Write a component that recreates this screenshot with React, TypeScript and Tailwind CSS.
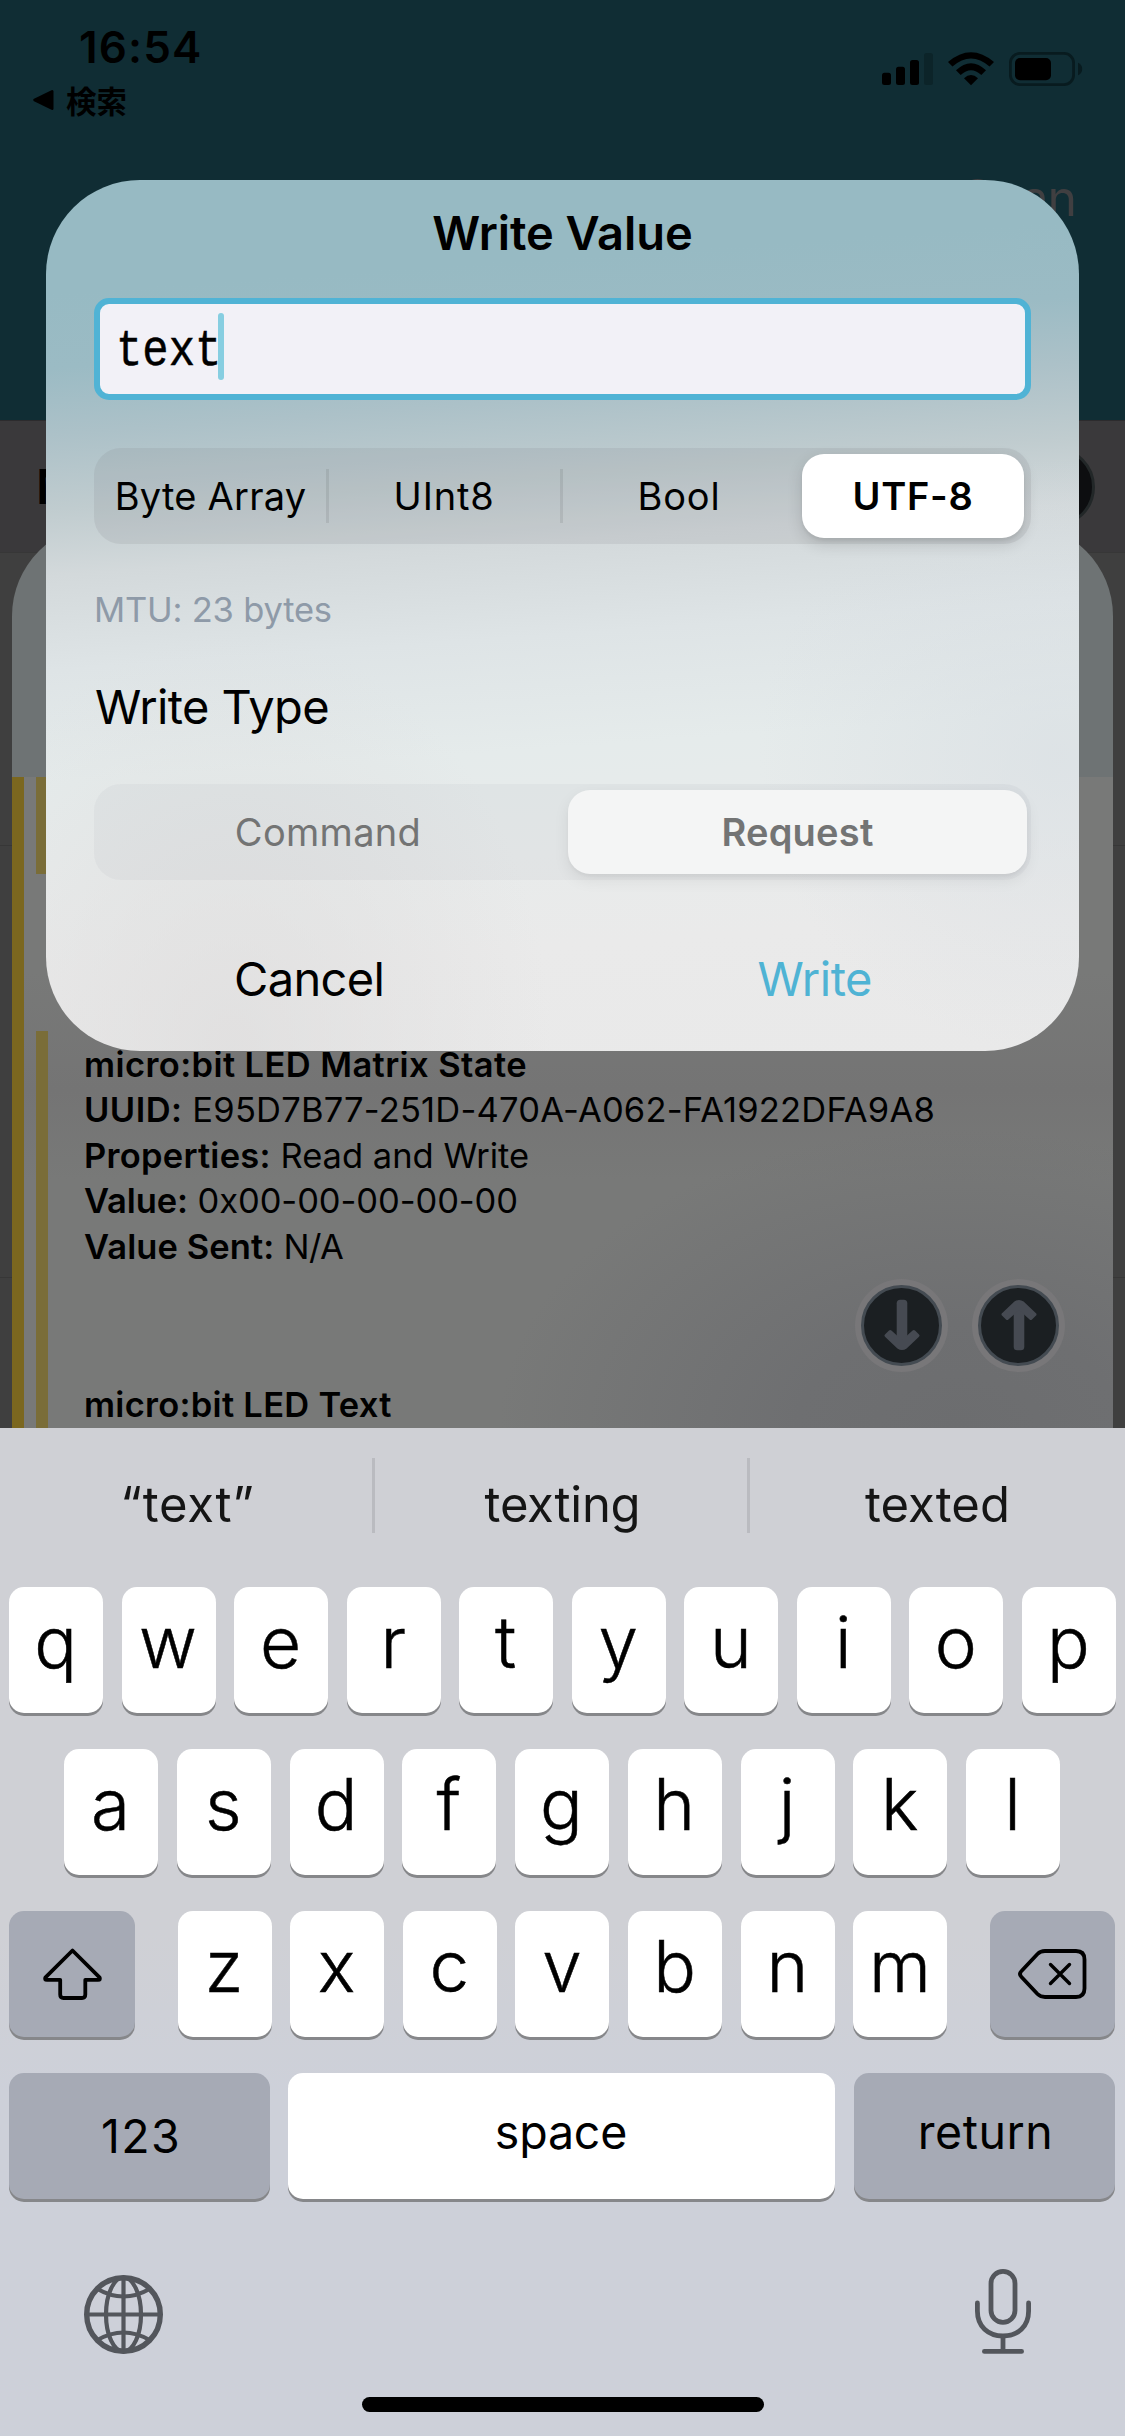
import type { ReactNode } from "react";

function StatusIcons() {
  return (
    <svg width="202" height="36" viewBox="881 51 202 36" className="block">
      <rect x="882" y="72.7" width="9" height="12.3" rx="2.5" />
      <rect x="896" y="66.7" width="9" height="18.3" rx="2.5" />
      <rect x="910" y="60" width="9" height="25" rx="2.5" />
      <rect x="924" y="53" width="9" height="32" rx="2.5" fill="#0c2429" />
      <path d="M948 62 Q971 42.5 994 62 L989.5 66.5 Q971 50.5 952.5 66.5Z" />
      <path d="M956 70.3 Q971 56 986 70.3 L981.3 75 Q971 65.5 960.7 75Z" />
      <path d="M964 78.3 Q971 71.8 978 78.3 L971 85.2Z" />
      <rect x="1010.4" y="53.4" width="63.2" height="31.2" rx="9.5" fill="none" stroke="#081b1f" strokeWidth="2.8" />
      <rect x="1015" y="58" width="36" height="22.3" rx="5" />
      <path d="M1078 62.7 Q1082.2 64.5 1082.2 69 T1078 75.3Z" fill="#081b1f" />
    </svg>
  );
}

function ArrowButton({ up }: { up?: boolean }) {
  return (
    <div className="flex h-[93px] w-[93px] items-center justify-center rounded-full bg-[#787779]">
      <div className="flex h-[81px] w-[81px] items-center justify-center rounded-full border-[3px] border-[#444b52] bg-[#1b1f22]">
        <svg width="50" height="52" viewBox="-25 -26 50 52" className={up ? "rotate-180" : ""}>
          <rect x="-5.3" y="-25.3" width="10.6" height="46" rx="3.5" fill="#464a52" />
          <path
            d="M-16.8 9.2 L-13 5.4 Q-11.8 4.4 -10.6 5.4 L0 15 L10.6 5.4 Q11.8 4.4 13 5.4 L16.8 9.2 Q18.2 10.4 17 11.7 L4.6 23.4 Q0 26.8 -4.6 23.4 L-17 11.7 Q-18.2 10.4 -16.8 9.2Z"
            fill="#464a52"
          />
        </svg>
      </div>
    </div>
  );
}

function Line({ label, track, children, valueTrack = "" }: { label: string; track: string; children?: ReactNode; valueTrack?: string }) {
  return (
    <p className="h-[45.4px] whitespace-nowrap text-[34.5px] leading-[45.4px]">
      <span className={`font-semibold ${track}`}>{label}</span>
      {children && <span className={valueTrack}> {children}</span>}
    </p>
  );
}

function Backdrop() {
  return (
    <div className="flex h-full flex-col bg-[#3f3f3f]">
      <header className="h-[420px] bg-[#102d34]">
        <div className="flex h-[173px] justify-between pr-[42px]">
          <div className="pt-[25px]">
            <p className="pl-[79px] text-[44px] leading-[44px] font-semibold tracking-[1.14px]">16:54</p>
            <div className="mt-[16px] flex h-[30px] items-center pl-[33px]">
              <svg width="21" height="22" viewBox="0 0 21 22">
                <path d="M1 9.8 L18.5 1.2 Q20.5 0.6 20.5 2.6 V19.4 Q20.5 21.4 18.5 20.8 L1 12.2 Q-0.6 11 1 9.8Z" />
              </svg>
              <span className="ml-[12px] font-['Noto_Sans_CJK_JP',sans-serif] text-[30.5px] leading-[30px] font-bold">検索</span>
            </div>
          </div>
          <div className="pt-[51px]">
            <StatusIcons />
          </div>
        </div>
        <p className="pr-[49px] text-right text-[50px] leading-[50px] tracking-[-1px] text-[#403f41]">Scan</p>
      </header>
      <div className="flex h-[132px] shrink-0 items-center justify-between border-t border-[#2c2b2d] bg-[#3a393b] pr-[30px] pl-[36px]">
        <span className="text-[48px] leading-[48px] font-semibold">N</span>
        <div className="h-20 w-20 rounded-full border-[3px] border-[#222728] bg-[#0d0e10]" />
      </div>
      <div className="h-[293px] border-t border-[#373737]" />
      <div className="h-[432px] border-t border-[#373737]" />
      <div className="h-[151px] border-t border-[#373737]" />
    </div>
  );
}

function Sheet() {
  return (
    <section className="absolute top-[524px] left-[12px] flex h-[904px] w-[1101px] flex-col overflow-hidden rounded-t-[92px] bg-[#6e7374]">
      <div className="h-[253px] shrink-0" />
      <div className="flex flex-1 bg-[#787978] bg-[radial-gradient(ellipse_460px_300px_at_86%_100%,#6c6d6f_0%,#6e6f71_35%,transparent_100%),linear-gradient(180deg,transparent_30%,#747474_48%,transparent_62%)]">
        <div className="w-[12px] bg-[#7b671f]" />
        <div className="ml-[12px] flex flex-1 flex-col">
          <div className="h-[97px] w-[12px] bg-[#7a6d38]" />
          <div className="mt-[157px] flex flex-1">
            <div className="w-[12px] bg-[#7a6d38]" />
            <div className="flex-1 pt-[11px] pl-[36px]">
              <Line label="micro:bit LED Matrix State" track="tracking-[0.4px]" />
              <Line label="UUID:" track="tracking-[0.44px]" valueTrack="tracking-[0.2px]">
                E95D7B77-251D-470A-A062-FA1922DFA9A8
              </Line>
              <Line label="Properties:" track="tracking-[0.25px]">
                Read and Write
              </Line>
              <Line label="Value:" track="tracking-[-0.1px]" valueTrack="tracking-[-0.08px]">
                0x00-00-00-00-00
              </Line>
              <Line label="Value Sent:" track="tracking-[0.1px]" valueTrack="tracking-[-0.6px]">
                N/A
              </Line>
              <div className="mt-[10px] mb-[10px] flex justify-end gap-[24px] pr-[48px]">
                <ArrowButton />
                <ArrowButton up />
              </div>
              <Line label="micro:bit LED Text" track="tracking-[0.28px]" />
            </div>
          </div>
        </div>
      </div>
    </section>
  );
}

function Divider() {
  return <div className="-mx-[1.5px] h-[54px] w-[3px] self-center bg-black/8" />;
}

function Dialog() {
  return (
    <section className="absolute top-[180px] left-[46px] h-[871px] w-[1033px] rounded-[94px] bg-[radial-gradient(ellipse_320px_420px_at_18%_100%,rgba(222,221,221,0.75),transparent),radial-gradient(ellipse_300px_300px_at_98%_66%,rgba(215,221,226,0.6),transparent),linear-gradient(176deg,#97bac3_0%,#97bac3_12%,#9bbbc4_20%,#acc1c8_27%,#c0cccf_35%,#d3d9db_42%,#dee4e6_52%,#e5ebeb_64%,#e8ebeb_75%,#eaeaea_85%,#e9e9e9_100%)] px-[48px] pt-[25px]">
      <h1 className="text-center text-[47px] leading-[56px] font-semibold tracking-[-0.06px]">Write Value</h1>
      <div className="mt-[37px] flex h-[102px] items-center rounded-[15px] border-[6px] border-[#50b3d5] bg-[#f2f1f7] pl-[16px]">
        <div className="h-[58px] w-[102px] shrink-0">
          <span className="inline-block origin-left scale-x-[0.844] pt-[3px] font-['Liberation_Mono',monospace] text-[52px] leading-[58px] [-webkit-text-stroke:0.5px_black]">text</span>
        </div>
        <div className="-mt-[5px] h-[67px] w-[6px] shrink-0 rounded-full bg-[#87cee1]" />
      </div>

      <div className="mt-[48px] flex h-[96px] justify-between rounded-[27px] bg-[#767680]/14 text-[38px] leading-none">
        <div className="flex w-[233px] items-center justify-center tracking-[0.24px]">Byte Array</div>
        <Divider />
        <div className="flex w-[234px] items-center justify-center tracking-[0.8px]">UInt8</div>
        <Divider />
        <div className="flex w-[236px] items-center justify-center tracking-[0.8px]">Bool</div>
        <div className="flex w-[234px] py-[6px] pr-[7px] pl-[5px]">
          <div className="flex flex-1 items-center justify-center rounded-[22px] bg-white font-semibold tracking-[0.73px] shadow-[0_6px_16px_rgba(0,0,0,0.14),0_3px_3px_rgba(0,0,0,0.05)]">
            UTF-8
          </div>
        </div>
      </div>

      <p className="mt-[47.5px] text-[34.5px] leading-[36px] tracking-[-0.2px] text-[#8e9aa8]">MTU: 23 bytes</p>
      <h2 className="mt-[51.5px] pl-[1px] text-[47px] leading-[56px] tracking-[-0.6px]">Write Type</h2>

      <div className="mt-[49px] flex h-[96px] rounded-[27px] bg-[#767680]/6 text-[38px] leading-none text-[#737474]">
        <div className="flex w-[468px] items-center justify-center tracking-[0.3px]">Command</div>
        <div className="flex w-[469px] py-[6px] pr-[4px] pl-[6px]">
          <div className="flex flex-1 items-center justify-center rounded-[22px] bg-[#f4f5f5] font-semibold tracking-[0.23px] shadow-[0_6px_16px_rgba(0,0,0,0.07),0_3px_3px_rgba(0,0,0,0.03)]">
            Request
          </div>
        </div>
      </div>

      <div className="mt-[71px] flex justify-between pr-[159px] pl-[140px] text-[47px] leading-[56px]">
        <span className="tracking-[-0.65px]">Cancel</span>
        <span className="tracking-[-0.49px] text-[#4fb3d4]">Write</span>
      </div>
    </section>
  );
}

function LetterKey({ children }: { children: string }) {
  return (
    <div className="flex h-[126px] w-[94px] items-center justify-center rounded-[15px] bg-white pr-[1px] pb-[16px] text-[71px] leading-none font-light shadow-[0_3px_0_#86878a] [-webkit-text-stroke:0.5px_black]">
      {children}
    </div>
  );
}

function ActionKey({ className, children }: { className: string; children: ReactNode }) {
  return (
    <div className={`flex h-[126px] items-center justify-center rounded-[15px] text-[46.5px] leading-none shadow-[0_3px_0_#86878a] ${className}`}>
      {children}
    </div>
  );
}

function Keyboard() {
  return (
    <section className="absolute bottom-0 left-0 flex h-[1008px] w-full flex-col bg-[#cfd0d5] bg-[linear-gradient(180deg,#cfd0d5_0%,#cfd0d5_50%,#cdd0d9_66%,#cdd0d9_100%)]">
      <div className="flex h-[154px] text-[49px] text-[#151515]">
        <div className="flex flex-1 items-center justify-center tracking-[0.73px]">“text”</div>
        <div className="mt-[30px] -ml-[3px] h-[75px] w-[3px] bg-[#babbc0]" />
        <div className="flex flex-1 items-center justify-center tracking-[-0.26px]">texting</div>
        <div className="mt-[30px] -ml-[3px] h-[75px] w-[3px] bg-[#babbc0]" />
        <div className="flex flex-1 items-center justify-center">texted</div>
      </div>

      <div className="mt-[5px] flex flex-col gap-[36px]">
        <div className="flex justify-between pr-[9px] pl-[9px]">
          {[..."qwertyuiop"].map((k) => (
            <LetterKey key={k}>{k}</LetterKey>
          ))}
        </div>
        <div className="flex justify-between pr-[65px] pl-[64px]">
          {[..."asdfghjkl"].map((k) => (
            <LetterKey key={k}>{k}</LetterKey>
          ))}
        </div>
        <div className="flex justify-between pr-[10px] pl-[9px]">
          <ActionKey className="w-[126px] bg-[#a6aab5]">
            <svg width="62" height="56" viewBox="41 1946 62 56" fill="none" stroke="#000" strokeWidth="3.8" strokeLinejoin="round">
              <path d="M72.5 1950.5 L99.5 1977.3 Q101 1979.8 98 1979.8 H85.3 V1994.5 Q85.3 1998 82 1998 H63.5 Q60.2 1998 60.2 1994.5 V1979.8 H47 Q44 1979.8 45.5 1977.3 Z" />
            </svg>
          </ActionKey>
          <div className="flex w-[770px] justify-between">
            {[..."zxcvbnm"].map((k) => (
              <LetterKey key={k}>{k}</LetterKey>
            ))}
          </div>
          <ActionKey className="w-[125px] bg-[#a6aab5]">
            <svg width="72" height="54" viewBox="1017 1947 72 54" fill="none" stroke="#000" strokeWidth="3.8" strokeLinejoin="round" strokeLinecap="round">
              <path d="M1045 1951 H1076 Q1084.5 1951 1084.5 1959.5 V1988.5 Q1084.5 1997 1076 1997 H1045 Q1040.5 1997 1037.5 1994 L1021.5 1977 Q1018.5 1974 1021.5 1971 L1037.5 1954 Q1040.5 1951 1045 1951Z" />
              <path d="M1050.5 1964.5 L1069.5 1983.5 M1069.5 1964.5 L1050.5 1983.5" strokeWidth="3.4" />
            </svg>
          </ActionKey>
        </div>
        <div className="flex justify-between pr-[10px] pl-[9px]">
          <ActionKey className="w-[261px] bg-[#a6aab5] pl-[3px] tracking-[1.4px]">123</ActionKey>
          <ActionKey className="-ml-[2px] w-[547px] bg-white pb-[8px] tracking-[-0.16px]">space</ActionKey>
          <ActionKey className="w-[261px] bg-[#a6aab5] pb-[8px] pl-[2px] tracking-[0.5px]">return</ActionKey>
        </div>
      </div>

      <div className="mt-[70px] flex h-[85px] items-end justify-between pr-[94px] pl-[84px]">
        <svg width="79" height="79" viewBox="-39.5 -39.5 79 79" fill="none" stroke="#53565c" strokeWidth="4.2">
          <circle r="36.8" strokeWidth="5.4" />
          <path d="M0 -37 V37" />
          <path d="M-37 0 H37" />
          <ellipse rx="17.5" ry="37" />
          <path d="M-26 -25.5 Q0 -10.5 26 -25.5 M-26 25.5 Q0 10.5 26 25.5" />
        </svg>
        <svg width="56" height="85" viewBox="975 2269 56 85" fill="none" stroke="#53565c" strokeWidth="4.8" strokeLinecap="round">
          <rect x="991" y="2271.4" width="24" height="51" rx="12" />
          <path d="M977.4 2303 V2311 C977.4 2326.5 988 2336 1003 2336 C1018 2336 1028.6 2326.5 1028.6 2311 V2303" />
          <path d="M1003 2337 V2350 M984.4 2351.4 H1021.6" />
        </svg>
      </div>
      <div className="mt-[43px] h-[15px] w-[402px] self-center rounded-full bg-black" />
    </section>
  );
}

export default function App() {
  return (
    <main className="relative h-[2436px] w-[1125px] overflow-hidden font-['Inter','Noto_Sans_CJK_JP',sans-serif] text-black">
      <Backdrop />
      <Sheet />
      <Dialog />
      <Keyboard />
    </main>
  );
}
